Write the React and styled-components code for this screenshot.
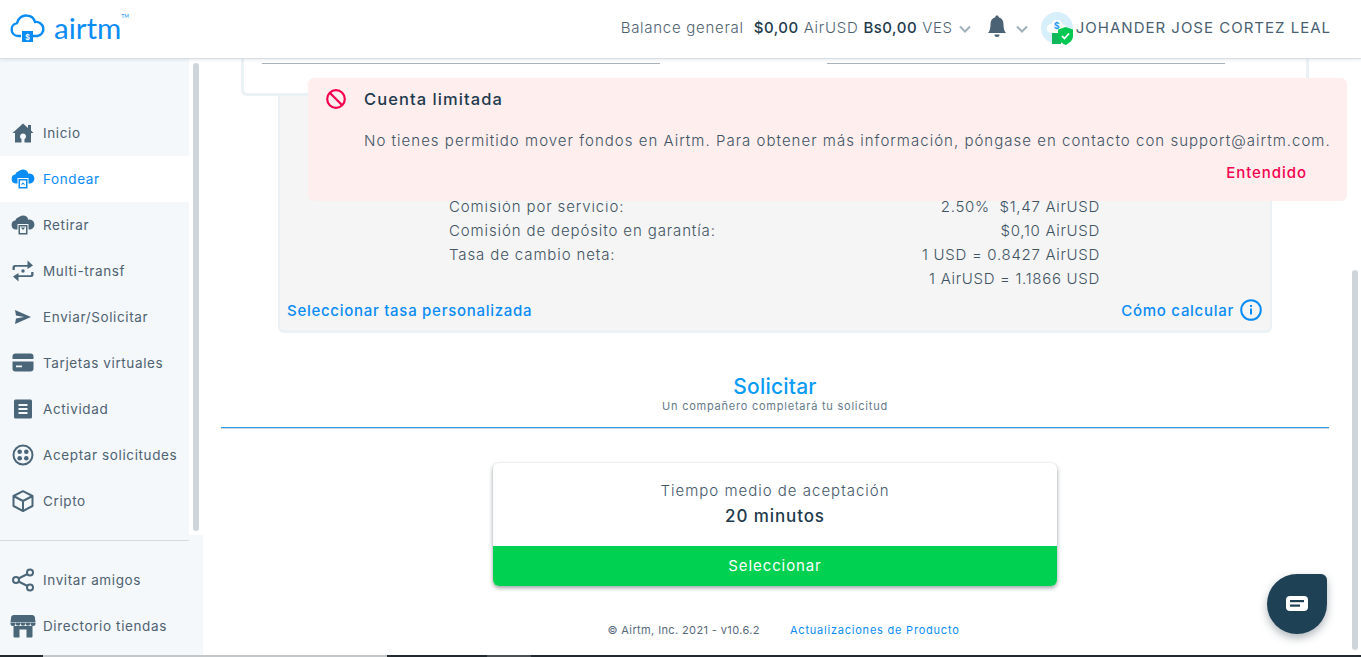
import React from 'react';
import styled, { createGlobalStyle } from 'styled-components';

const GlobalStyle = createGlobalStyle`
    html, body {
        margin: 0;
        padding: 0;
        height: 100%;
        overflow: hidden;
        background: #fff;
    }
    * {
        box-sizing: border-box;
    }
    body {
        font-family: Inter, "Liberation Sans", sans-serif;
        color: #4f6272;
    }
`;

const Page = styled.div`
    position: relative;
    display: grid;
    grid-template-rows: 59px 1fr 2px;
    width: 1361px;
    height: 657px;
    overflow: hidden;
`;

/* header */
const Header = styled.header`
    position: relative;
    z-index: 3;
    display: flex;
    justify-content: space-between;
    align-items: center;
    padding: 0 30px 3px 10px;
    background: #fff;
    border-bottom: 1px solid #d8dfe4;
    box-shadow: 0 1px 3px rgba(60, 80, 100, 0.12);
`;

const Logo = styled.div`
    display: flex;
    align-items: center;
    gap: 8px;
    color: #0a8cf5;
`;

const LogoWord = styled.span`
    position: relative;
    font-family: Lato, sans-serif;
    font-size: 29.5px;
    line-height: 30px;
    letter-spacing: 0;
`;

const LogoMark = styled.span`
    position: absolute;
    top: 1px;
    left: 100%;
    font-size: 5px;
    line-height: 5px;
`;

const Account = styled.div`
    display: flex;
    align-items: center;
    font-size: 15px;
    font-weight: 300;
    letter-spacing: 0.72px;
`;

const Amount = styled.strong`
    font-weight: 500;
    letter-spacing: 0.5px;
    color: #223a4c;
    margin-left: ${p => p.$gap || 5}px;
    margin-right: 5px;
`;

const Chevron = styled.svg`
    width: 12px;
    height: 8px;
    margin: 2px 0 0 6px;
    fill: none;
    stroke: #9fb0bb;
    stroke-width: 2;
`;

const Bell = styled.svg`
    width: 20px;
    height: 23px;
    margin: 0 3px 2px 16px;
    fill: #4a6274;
`;

const Avatar = styled.div`
    position: relative;
    display: flex;
    width: 32px;
    height: 32px;
    margin-left: 13px;
    margin-right: 3px;
    justify-content: center;
    align-items: center;
    border-radius: 50%;
    background: #d6effb;
`;

const Shield = styled.svg`
    position: absolute;
    right: -1px;
    bottom: -1px;
    width: 22px;
    height: 18px;
`;

const UserName = styled.span`
    color: #4a5f70;
    font-weight: 400;
    letter-spacing: 1px;
`;

const Body = styled.div`
    display: grid;
    grid-template-columns: 203px 1fr 9px;
    min-height: 0;
`;

/* sidebar */
const Sidebar = styled.aside`
    display: grid;
    grid-template-rows: 476px 1fr;
    min-height: 0;
    background: #f4f8fb;
`;

const SideTop = styled.div`
    display: flex;
    background: #fff;
`;

const Nav = styled.nav`
    width: 189px;
    padding-top: 51px;
    background: #f4f8fb;
`;

const SideGutter = styled.div`
    flex: 1;
    padding: 4px;
    border-radius: 0 0 6px 6px;
`;

const SideThumb = styled.div`
    width: 6px;
    height: 100%;
    background: #cfd6db;
    border-radius: 3px;
`;

const SideBottom = styled.div`
    padding-top: 5px;
`;

const Divider = styled.div`
    width: 189px;
    height: 1px;
    background: #d5dbdf;
    margin-bottom: 16px;
`;

const NavItem = styled.a`
    display: flex;
    align-items: center;
    gap: 9px;
    height: 46px;
    padding-left: 12px;
    font-size: 13.5px;
    letter-spacing: 0.62px;
    color: ${p => (p.$active ? '#0a8cf5' : '#4f6272')};
    background: ${p => (p.$active ? '#fff' : 'transparent')};
    white-space: nowrap;
`;

const NavIcon = styled.svg`
    flex: none;
    width: 22px;
    height: 22px;
    overflow: visible;
    fill: currentColor;
    color: ${p => (p.$active ? '#0a8cf5' : '#4a6678')};
`;

/* main */
const Main = styled.main`
    display: flex;
    flex-direction: column;
    align-items: center;
    min-width: 0;
    padding: 0 23px 0 18px;
`;

const OuterCard = styled.div`
    display: flex;
    flex: none;
    justify-content: space-between;
    width: 1068px;
    height: 37px;
    padding: 4px 81px 0 18px;
    border: solid #ebf2f6;
    border-width: 0 3px 3px 3px;
    border-radius: 0 0 6px 6px;
`;

const OuterRule = styled.div`
    width: 398px;
    height: 1px;
    background: #a9b2b8;
`;

const QuoteCard = styled.section`
    display: flex;
    flex: none;
    flex-direction: column;
    width: 994px;
    height: 237px;
    padding: 99px 8px 0 7px;
    background: #f5f5f5;
    border: solid #ebf2f6;
    border-width: 0 2px 3px 2px;
    border-radius: 0 0 6px 6px;
`;

const FeeRow = styled.div`
    display: flex;
    flex: none;
    justify-content: space-between;
    width: 651px;
    margin: 0 auto;
    height: 24px;
    line-height: 24px;
    font-size: 15px;
    font-weight: 300;
    letter-spacing: 0.7px;
    white-space: pre;
    color: #3f5464;
`;

const FeeLabel = styled.span`
    letter-spacing: 0.88px;
`;

const QuoteFooter = styled.div`
    display: flex;
    justify-content: space-between;
    align-items: center;
    margin-top: 8px;
`;

const BlueLink = styled.a`
    display: flex;
    align-items: center;
    gap: 6px;
    font-size: 15px;
    font-weight: 500;
    letter-spacing: 0.72px;
    color: #0a8cf5;
`;

const InfoIcon = styled.svg`
    width: 22px;
    height: 22px;
`;

const SectionHead = styled.div`
    width: 100%;
    margin-top: 42px;
    padding-bottom: 14px;
    text-align: center;
    border-bottom: 1px solid #2d9ae8;
    box-shadow: 0 1px 0 #d5dade;
`;

const SectionTitle = styled.h2`
    margin: 0;
    font-size: 21px;
    line-height: 24px;
    font-weight: 500;
    letter-spacing: 0.2px;
    color: #0a9cf5;
`;

const SectionSub = styled.p`
    margin: 0;
    font-size: 11px;
    line-height: 14px;
    letter-spacing: 0.77px;
    color: #65798a;
`;

const OptionCard = styled.div`
    width: 564px;
    margin-top: 35px;
    background: #fff;
    border-radius: 6px;
    overflow: hidden;
    box-shadow: 0 2px 4px rgba(40, 50, 60, 0.45), 0 0 3px rgba(40, 50, 60, 0.05);
`;

const OptionInfo = styled.div`
    height: 83px;
    padding-top: 17px;
    text-align: center;
`;

const OptionLabel = styled.div`
    font-size: 15px;
    font-weight: 300;
    line-height: 22px;
    letter-spacing: 1px;
    color: #43586a;
`;

const OptionValue = styled.div`
    font-size: 17px;
    line-height: 28px;
    font-weight: 500;
    letter-spacing: 0.9px;
    color: #1f3a4d;
`;

const SelectButton = styled.button`
    display: block;
    width: 100%;
    height: 40px;
    padding: 0 0 2px;
    border: 0;
    background: #00d151;
    color: #fff;
    font-family: inherit;
    font-size: 15px;
    letter-spacing: 0.9px;
`;

const Footer = styled.footer`
    display: flex;
    gap: 30px;
    margin: 37px 0 0 17px;
    font-size: 11px;
    line-height: 14px;
    letter-spacing: 0.38px;
    color: #56697a;
`;

const FooterLink = styled.a`
    color: #0a8cf5;
    letter-spacing: 0.78px;
`;

/* page scroll */
const PageScroll = styled.div`
    padding: 211px 3px 5px 0;
`;

const PageThumb = styled.div`
    width: 6px;
    height: 100%;
    background: #cfd6db;
    border-radius: 3px;
`;

/* dark strip of the window below */
const BottomStrip = styled.div`
    display: flex;
    background: #222a30;
`;

const StripPart = styled.div`
    width: ${p => p.$w}px;
    flex: ${p => (p.$w ? 'none' : 1)};
    background: ${p => p.$c};
`;

/* floating parts */
const Toast = styled.div`
    position: absolute;
    z-index: 2;
    top: 78px;
    left: 308px;
    width: 1039px;
    height: 123px;
    padding: 11px 16px 0 18px;
    background: #feeeee;
    border-radius: 6px;
`;

const ToastHead = styled.div`
    display: flex;
    align-items: center;
    gap: 18px;
    height: 20px;
`;

const BanIcon = styled.svg`
    width: 20px;
    height: 20px;
    fill: none;
    stroke: #f5004f;
    stroke-width: 2.2;
`;

const ToastTitle = styled.div`
    font-size: 16.5px;
    font-weight: 500;
    letter-spacing: 1.07px;
    color: #1f3a4d;
`;

const ToastText = styled.p`
    margin: 22px 0 0 38px;
    font-size: 15px;
    font-weight: 300;
    line-height: 20px;
    letter-spacing: 1.02px;
    color: #3f5464;
    white-space: nowrap;
`;

const ToastAction = styled.div`
    margin: 13px 24px 0 0;
    text-align: right;
    font-size: 15px;
    line-height: 18px;
    font-weight: 500;
    letter-spacing: 0.95px;
    color: #f5004f;
`;

const ChatBubble = styled.div`
    position: absolute;
    z-index: 2;
    left: 1267px;
    top: 574px;
    display: flex;
    justify-content: center;
    align-items: center;
    width: 60px;
    height: 60px;
    background: #1f4156;
    border-radius: 50% 6px 50% 50%;
    box-shadow: 0 4px 8px rgba(30, 50, 60, 0.35);
`;

const ChatIcon = styled.svg`
    width: 24px;
    height: 18px;
`;

const menuIcons = {
    home: <path d="M11 1.500 16 6V3h3v5.500L21.500 11H19v9.500h-6.500V17a3 3 0 1 0-3 0v3.500H3V11H.5z" />,
    fund: (
        <>
            <path d="M11 1.500a5.500 5.500 0 0 1 5.300 4.200A5 5 0 0 1 18.500 15.500h-2V10h-11v5.500H4a4.500 4.500 0 0 1-.8-8.900A5.500 5.500 0 0 1 7 3a5.500 5.500 0 0 1 4-1.500z" />
            <path fillRule="evenodd" d="M6.500 11h9v9.500h-9zM8 12.500v6.500h6v-6.500z" />
            <path d="M8.800 16.800 11 14.300l2.200 2.500h-1.300L11 15.800l-.9 1z" />
        </>
    ),
    withdraw: (
        <>
            <path d="M11 1.500a5.500 5.500 0 0 1 5.300 4.200A5 5 0 0 1 18.500 15.500h-2V10h-11v5.500H4a4.500 4.500 0 0 1-.8-8.900A5.500 5.500 0 0 1 7 3a5.500 5.500 0 0 1 4-1.500z" />
            <path fillRule="evenodd" d="M6.500 11h9v9.500h-9zM8 12.500v6.500h6v-6.500z" />
            <path d="M8.800 13.500h4.400L11 16z" />
        </>
    ),
    transfer: (
        <>
            <path d="M.5 10V7.500A2.500 2.500 0 0 1 3 5h12.500V.5L21 5.500 15.500 9V6.800H3.800a1 1 0 0 0-1 1V10z" />
            <path d="M21.500 12v2.500A2.500 2.500 0 0 1 19 17H6.500v4.500L1 16.500 6.500 13v2.200h11.700a1 1 0 0 0 1-1V12z" />
            <circle cx="11" cy="11" r="1.700" />
        </>
    ),
    send: <path d="M3 4 19 11 3 18l1-5.500 8-1.500-8-1.500z" />,
    card: (
        <>
            <path d="M3.500 1.500h15A3 3 0 0 1 21.500 4.500V7H.5V4.500a3 3 0 0 1 3-3z" />
            <path fillRule="evenodd" d="M.5 9.500h21v7a3 3 0 0 1-3 3h-15a3 3 0 0 1-3-3zm3.500 4v1.800h6v-1.800z" />
        </>
    ),
    activity: (
        <path fillRule="evenodd" d="M3.500 1.500h15A1.500 1.500 0 0 1 20 3v16a1.500 1.500 0 0 1-1.500 1.500h-15A1.500 1.500 0 0 1 2 19V3a1.500 1.500 0 0 1 1.500-1.500zM6.500 6v2h9V6zm0 4v2h9v-2zm0 4v2h9v-2z" />
    ),
    accept: (
        <>
            <path fillRule="evenodd" d="M11 .5a10.500 10.500 0 1 1 0 21 10.500 10.500 0 0 1 0-21zm0 2a8.500 8.500 0 1 0 0 17 8.500 8.500 0 0 0 0-17z" />
            <circle cx="7.700" cy="7.700" r="2.300" />
            <circle cx="14.300" cy="7.700" r="2.300" />
            <circle cx="7.700" cy="14.300" r="2.300" />
            <circle cx="14.300" cy="14.300" r="2.300" />
        </>
    ),
    crypto: (
        <path fill="none" stroke="currentColor" strokeWidth="2" strokeLinejoin="round" d="M11 1.200 20.500 6V16L11 21 1.500 16V6zM1.500 6 11 11 20.500 6M11 11V21" />
    ),
    share: (
        <>
            <circle cx="4" cy="11" r="3" fill="none" stroke="currentColor" strokeWidth="2" />
            <circle cx="18" cy="3.500" r="3" fill="none" stroke="currentColor" strokeWidth="2" />
            <circle cx="18" cy="18.500" r="3" fill="none" stroke="currentColor" strokeWidth="2" />
            <path fill="none" stroke="currentColor" strokeWidth="2" d="M6.500 9.500 15.500 5M6.500 12.500 15.500 17" />
        </>
    ),
    store: (
        <>
            <path d="M2 0h18a3 3 0 0 1 3 3.500L23.500 7H-1.500L-1 3.500A3 3 0 0 1 2 0z" />
            <path d="M-1.500 7.500h5v1a2.500 2.500 0 0 1-5 0zM3.800 7.500h4.600v1a2.300 2.300 0 0 1-4.600 0zM8.700 7.500h4.600v1a2.300 2.300 0 0 1-4.600 0zM13.600 7.500h4.600v1a2.300 2.300 0 0 1-4.600 0zM18.500 7.500h5v1a2.500 2.500 0 0 1-5 0z" />
            <path fillRule="evenodd" d="M1.500 11h19v10.500a1 1 0 0 1-1 1h-17a1 1 0 0 1-1-1zM7.500 14.500v8h7v-8z" />
        </>
    ),
};

const MenuEntry = ({ icon, label, active }) => (
    <NavItem $active={active}>
        <NavIcon $active={active} viewBox="0 0 22 22">
            {menuIcons[icon]}
        </NavIcon>
        {label}
    </NavItem>
);

const mainMenu = [
    { icon: 'home', label: 'Inicio' },
    { icon: 'fund', label: 'Fondear', active: true },
    { icon: 'withdraw', label: 'Retirar' },
    { icon: 'transfer', label: 'Multi-transf' },
    { icon: 'send', label: 'Enviar/Solicitar' },
    { icon: 'card', label: 'Tarjetas virtuales' },
    { icon: 'activity', label: 'Actividad' },
    { icon: 'accept', label: 'Aceptar solicitudes' },
    { icon: 'crypto', label: 'Cripto' },
];

const fees = [
    ['Comisión por servicio:', '2.50%  $1,47 AirUSD'],
    ['Comisión de depósito en garantía:', '$0,10 AirUSD'],
    ['Tasa de cambio neta:', '1 USD = 0.8427 AirUSD'],
    ['', '1 AirUSD = 1.1866 USD'],
];

const strip = [
    [43, '#222a30'],
    [344, '#c4c7c9'],
    [100, '#222a30'],
    [44, '#4a4f53'],
    [0, '#222a30'],
];

const ChevronDown = () => (
    <Chevron viewBox="0 0 12 8">
        <path d="M1 1.500 6 6.500 11 1.500" />
    </Chevron>
);

const App = () => (
    <>
        <GlobalStyle />
        <Page>
            <Header>
                <Logo>
                    <svg width="36" height="32" viewBox="0 0 36 32">
                        <path
                            fill="none"
                            stroke="#0a8cf5"
                            strokeWidth="2.400"
                            d="M11 24H8a6.500 6.500 0 0 1-1-12.900C8 6 12.500 3 17 3.500c4 .3 7 3.200 8 6.500a6.500 6.500 0 0 1 2.500 14H23"
                        />
                        <rect x="12" y="19" width="11" height="11" fill="#0a8cf5" />
                        <text x="17.500" y="27.500" fontSize="7" fontWeight="700" textAnchor="middle" fill="#fff">$</text>
                    </svg>
                    <LogoWord>
                        airtm
                        <LogoMark>TM</LogoMark>
                    </LogoWord>
                </Logo>
                <Account>
                    Balance general
                    <Amount $gap={10}>$0,00</Amount>
                    AirUSD
                    <Amount>Bs0,00</Amount>
                    VES
                    <ChevronDown />
                    <Bell viewBox="0 0 20 23">
                        <path d="M10 .5c1 0 1.700.7 1.700 1.700C15 3 16.500 5.500 16.500 9.500c0 4 .8 6.500 2.500 8.500H1c1.700-2 2.500-4.500 2.500-8.500C3.500 5.500 5 3 8.300 2.200 8.300 1.200 9 .5 10 .5z" />
                        <path d="M7.500 19.500h5a2.500 2.500 0 0 1-5 0z" />
                    </Bell>
                    <ChevronDown />
                    <Avatar>
                        <svg width="22" height="18" viewBox="0 0 22 18">
                            <path fill="#fff" d="M11 1a5.500 5.500 0 0 1 5.300 4.200A4.500 4.500 0 0 1 17 14H5a4.500 4.500 0 0 1 .5-9A5.500 5.500 0 0 1 11 1z" />
                            <text x="11" y="10" fontSize="9" fontWeight="700" textAnchor="middle" fill="#2a9df4">$</text>
                        </svg>
                        <Shield viewBox="0 0 22 18">
                            <rect x="0" y="6" width="9" height="11" fill="#12b75c" />
                            <path fill="#00c853" d="M13.500 0 21 2.500V9c0 4-3 7-7.500 9C9 16 6 13 6 9V2.500z" />
                            <path fill="none" stroke="#fff" strokeWidth="1.800" d="M10 9l2.500 2.500L17 6.500" />
                        </Shield>
                    </Avatar>
                    <UserName>JOHANDER JOSE CORTEZ LEAL</UserName>
                </Account>
            </Header>
            <Body>
                <Sidebar>
                    <SideTop>
                        <Nav>
                            {mainMenu.map(item => (
                                <MenuEntry key={item.label} {...item} />
                            ))}
                        </Nav>
                        <SideGutter>
                            <SideThumb />
                        </SideGutter>
                    </SideTop>
                    <SideBottom>
                        <Divider />
                        <MenuEntry icon="share" label="Invitar amigos" />
                        <MenuEntry icon="store" label="Directorio tiendas" />
                    </SideBottom>
                </Sidebar>
                <Main>
                    <OuterCard>
                        <OuterRule />
                        <OuterRule />
                    </OuterCard>
                    <QuoteCard>
                        {fees.map(([label, value]) => (
                            <FeeRow key={value}>
                                <FeeLabel>{label}</FeeLabel>
                                <span>{value}</span>
                            </FeeRow>
                        ))}
                        <QuoteFooter>
                            <BlueLink>Seleccionar tasa personalizada</BlueLink>
                            <BlueLink>
                                Cómo calcular
                                <InfoIcon viewBox="0 0 22 22">
                                    <circle cx="11" cy="11" r="9.800" fill="none" stroke="#0a8cf5" strokeWidth="2" />
                                    <rect x="10" y="9.500" width="2" height="6" fill="#0a8cf5" />
                                    <rect x="10" y="6" width="2" height="2" fill="#0a8cf5" />
                                </InfoIcon>
                            </BlueLink>
                        </QuoteFooter>
                    </QuoteCard>
                    <SectionHead>
                        <SectionTitle>Solicitar</SectionTitle>
                        <SectionSub>Un compañero completará tu solicitud</SectionSub>
                    </SectionHead>
                    <OptionCard>
                        <OptionInfo>
                            <OptionLabel>Tiempo medio de aceptación</OptionLabel>
                            <OptionValue>20 minutos</OptionValue>
                        </OptionInfo>
                        <SelectButton>Seleccionar</SelectButton>
                    </OptionCard>
                    <Footer>
                        <span>© Airtm, Inc. 2021 - v10.6.2</span>
                        <FooterLink>Actualizaciones de Producto</FooterLink>
                    </Footer>
                </Main>
                <PageScroll>
                    <PageThumb />
                </PageScroll>
            </Body>
            <BottomStrip>
                {strip.map(([w, c], i) => (
                    <StripPart key={i} $w={w} $c={c} />
                ))}
            </BottomStrip>
            <Toast>
                <ToastHead>
                    <BanIcon viewBox="0 0 20 20">
                        <circle cx="10" cy="10" r="8.800" />
                        <path d="M4 4l12 12" />
                    </BanIcon>
                    <ToastTitle>Cuenta limitada</ToastTitle>
                </ToastHead>
                <ToastText>
                    No tienes permitido mover fondos en Airtm. Para obtener más información, póngase en contacto con support@airtm.com.
                </ToastText>
                <ToastAction>Entendido</ToastAction>
            </Toast>
            <ChatBubble>
                <ChatIcon viewBox="0 0 24 18">
                    <rect x="1" y="1" width="22" height="15" rx="4" fill="#fff" />
                    <rect x="5" y="5" width="14" height="2.200" fill="#1f4156" />
                    <rect x="5" y="9.500" width="10" height="2.200" fill="#1f4156" />
                </ChatIcon>
            </ChatBubble>
        </Page>
    </>
);

export default App;
